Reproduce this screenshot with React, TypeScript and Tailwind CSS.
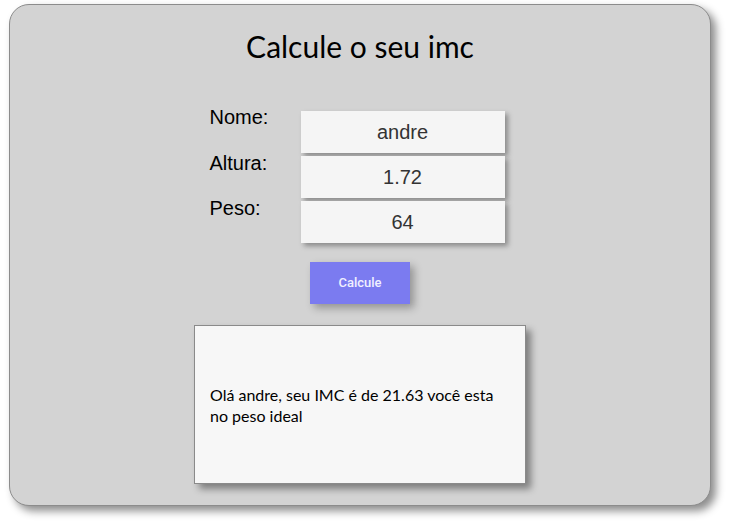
import React from "react";

const labels = ["Nome:", "Altura:", "Peso:"];
const values = ["andre", "1.72", "64"];

export default function App() {
  return (
    <div className="w-[729px] h-[530px] bg-white pt-[4px] pl-[9px]">
      {/* CARD */}
      <div className="w-[702px] h-[502px] bg-[#d3d3d3] border border-[#8c8c8c] rounded-[20px] shadow-[5px_5px_8px_rgba(0,0,0,0.45)] flex flex-col items-center">
        <h1 className="mt-[24px] text-[30px] leading-[34px] text-black font-['Lato',sans-serif]">
          Calcule o seu imc
        </h1>

        {/* FORM */}
        <div className="mt-[41px] flex ml-[-6px]">
          <div className="w-[91px] pt-[2px] flex flex-col font-['Liberation_Sans',Arial,sans-serif] text-[20px] leading-[23px] text-black">
            {labels.map((l) => (
              <div key={l} className="h-[45.5px]">
                {l}
              </div>
            ))}
          </div>
          <div className="mt-[7px] flex flex-col gap-[3px]">
            {values.map((v) => (
              <div
                key={v}
                className="w-[204px] h-[42px] bg-[#f5f5f5] shadow-[3px_3px_5px_rgba(0,0,0,0.35)] flex items-center justify-center font-['Liberation_Sans',Arial,sans-serif] text-[20px] text-[#333]"
              >
                {v}
              </div>
            ))}
          </div>
        </div>

        {/* BUTTON */}
        <button className="mt-[19px] w-[100px] h-[42px] bg-[#7b7bf0] text-[#f0f0ff] text-[13px] font-medium font-['Roboto',sans-serif] shadow-[4px_4px_8px_rgba(0,0,0,0.3)]">
          Calcule
        </button>

        {/* RESULT */}
        <div className="mt-[21px] w-[332px] h-[159px] bg-[#f7f7f7] border border-[#8a8a8a] shadow-[5px_5px_7px_rgba(0,0,0,0.4)] flex items-center px-[15px] font-['Lato',sans-serif] text-[16px] leading-[21px] text-black">
          <p>Olá andre, seu IMC é de 21.63 você esta no peso ideal</p>
        </div>
      </div>
    </div>
  );
}
